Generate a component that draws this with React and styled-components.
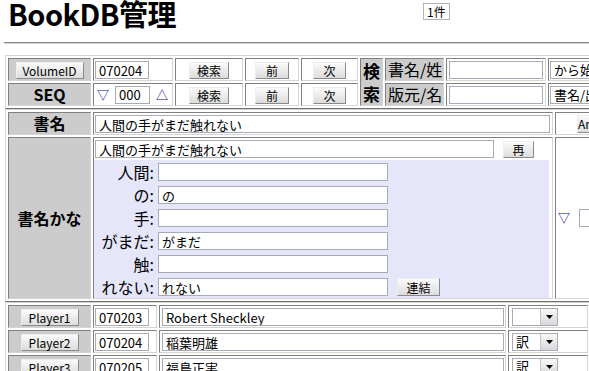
import styled, { createGlobalStyle } from "styled-components";

const FONT = `"Noto Sans CJK JP", "Liberation Sans", sans-serif`;

const GlobalStyle = createGlobalStyle`
  html, body {
    margin: 0;
    padding: 0;
    overflow: hidden;
    background: #fff;
  }
  body {
    font-family: ${FONT};
    font-size: 12px;
    color: #000;
  }
`;

const Page = styled.div`
  width: 589px;
  height: 371px;
  overflow: hidden;
  padding-left: 5px;
  box-sizing: border-box;
`;

const Header = styled.header`
  display: flex;
  align-items: flex-start;
  height: 42px;
`;

const Title = styled.h1`
  margin: 0;
  width: 418px;
  padding-left: 3px;
  box-sizing: border-box;
  font-size: 29px;
  font-weight: bold;
  line-height: 26px;
  letter-spacing: -0.5px;
  white-space: nowrap;
`;

const Count = styled.span`
  margin-top: 3px;
  height: 17px;
  box-sizing: border-box;
  padding: 0 3px;
  border: 1px solid #b4b4b4;
  font-size: 12px;
  line-height: 15px;
`;

const Rule = styled.hr`
  margin: 0 0 0 -1px;
  border: 0;
  border-top: 1px solid #858585;
  border-bottom: 1px solid #d6d6d6;
`;

const Frame = styled.table`
  border-collapse: separate;
  border-spacing: 2px;
  table-layout: fixed;
  width: ${(p) => p.$w}px;
  margin-top: ${(p) => p.$mt || 0}px;
  border: 1px solid;
  border-color: #d4d4d4 #707070 #707070 #d4d4d4;
  font-size: 12px;
`;

const Col = styled.col`
  width: ${(p) => p.$w}px;
`;

const Cell = styled.td`
  box-sizing: border-box;
  height: ${(p) => p.$h || 23}px;
  padding: 0 ${(p) => p.$pad ?? 2}px;
  border: 1px solid;
  border-color: #808080 #d4d4d4 #d4d4d4 #808080;
  background: ${(p) => (p.$gray ? "#cccccc" : "#fff")};
  text-align: ${(p) => p.$align || "left"};
  vertical-align: ${(p) => p.$valign || "middle"};
  white-space: nowrap;
  overflow: hidden;
`;

const Heading = styled.span`
  font-size: 16px;
  font-weight: bold;
  line-height: 18px;
`;

const Stack = styled.div`
  font-size: 17px;
  font-weight: bold;
  line-height: 23px;
  text-align: center;
`;

const Label = styled.span`
  font-size: 16px;
  line-height: 18px;
`;

const Btn = styled.button`
  box-sizing: border-box;
  width: ${(p) => p.$w}px;
  height: ${(p) => p.$h || 17}px;
  padding: 0;
  margin: 0;
  font-family: ${FONT};
  font-size: 12px;
  line-height: 15px;
  color: #000;
  background: linear-gradient(#fbfbfb, #dcdcdc);
  border: 1px solid;
  border-color: #eeeeee #8a8a8a #8a8a8a #eeeeee;
  vertical-align: middle;
`;

const Field = styled.input`
  box-sizing: border-box;
  width: ${(p) => p.$w}px;
  height: 18px;
  padding: 0 3px;
  margin: 0;
  font-family: ${FONT};
  font-size: 13px;
  color: #000;
  background: #fff;
  border: 1px solid #a9aab8;
  vertical-align: middle;
  outline: none;
`;

const SelectBox = styled.div`
  display: inline-flex;
  box-sizing: border-box;
  width: ${(p) => p.$w}px;
  height: 18px;
  border: 1px solid #a9aab8;
  background: #fff;
  vertical-align: middle;
`;

const SelectText = styled.span`
  flex: 1;
  padding-left: 3px;
  font-size: 13px;
  line-height: 16px;
  overflow: hidden;
  white-space: nowrap;
`;

const SelectArrow = styled.span`
  display: flex;
  align-items: center;
  justify-content: center;
  width: 16px;
  background: linear-gradient(#f8f8f8, #d8d8d8);
  border-left: 1px solid #c4c4c4;
`;

const Tri = styled.span`
  color: #0000a0;
  font-size: 12px;
  line-height: 18px;
`;

const Seq = styled.div`
  display: flex;
  align-items: center;
  gap: 6px;
  padding-left: 1px;
`;

const KanaTop = styled.div`
  display: flex;
  align-items: center;
  gap: 9px;
  height: 22px;
  padding-left: 1px;
`;

const KanaPanel = styled.div`
  display: grid;
  grid-template-columns: 60px 230px auto;
  column-gap: 4px;
  row-gap: 5px;
  align-items: center;
  margin-right: 3px;
  padding: 3px 0 2px;
  background: #e6e6fa;
`;

const KanaLabel = styled.span`
  font-size: 16px;
  line-height: 18px;
  text-align: right;
`;

const Side = styled.div`
  display: flex;
  align-items: center;
  gap: 9px;
  padding-left: ${(p) => p.$pl || 0}px;
`;

const Select = ({ w, value }) => (
  <SelectBox $w={w}>
    <SelectText>{value}</SelectText>
    {w < 80 && (
      <SelectArrow>
        <svg width="7" height="4" viewBox="0 0 7 4">
          <polygon points="0,0 7,0 3.5,4" fill="#000" />
        </svg>
      </SelectArrow>
    )}
  </SelectBox>
);

const kana = [
  ["人間", ""],
  ["の", "の"],
  ["手", ""],
  ["がまだ", "がまだ"],
  ["触", ""],
  ["れない", "れない"],
];

const players = [
  ["Player1", "070203", "Robert Sheckley", ""],
  ["Player2", "070204", "稲葉明雄", "訳"],
  ["Player3", "070205", "福島正実", "訳"],
];

export default function App() {
  return (
    <Page>
      <GlobalStyle />
      <Header>
        <Title>BookDB管理</Title>
        <Count>1件</Count>
      </Header>
      <Rule />

      <Frame $w={638} $mt={11}>
        <colgroup>
          <Col $w={83} />
          <Col $w={80} />
          <Col $w={68} />
          <Col $w={54} />
          <Col $w={57} />
          <Col $w={23} />
          <Col $w={59} />
          <Col $w={100} />
          <Col $w={92} />
        </colgroup>
        <tbody>
          <tr>
            <Cell $gray $align="center">
              <Btn $w={68}>VolumeID</Btn>
            </Cell>
            <Cell $pad={1}>
              <Field $w={54} defaultValue="070204" />
            </Cell>
            <Cell $align="center">
              <Btn $w={40}>検索</Btn>
            </Cell>
            <Cell $align="center">
              <Btn $w={34}>前</Btn>
            </Cell>
            <Cell $align="center">
              <Btn $w={33}>次</Btn>
            </Cell>
            <Cell $gray rowSpan={2} $pad={0}>
              <Stack>
                検<br />索
              </Stack>
            </Cell>
            <Cell $gray>
              <Label>書名/姓</Label>
            </Cell>
            <Cell>
              <Field $w={94} />
            </Cell>
            <Cell $pad={1}>
              <Select w={90} value="から始まる" />
            </Cell>
          </tr>
          <tr>
            <Cell $gray $align="center">
              <Heading>SEQ</Heading>
            </Cell>
            <Cell>
              <Seq>
                <Tri>▽</Tri>
                <Field $w={35} defaultValue="000" />
                <Tri>△</Tri>
              </Seq>
            </Cell>
            <Cell $align="center">
              <Btn $w={40}>検索</Btn>
            </Cell>
            <Cell $align="center">
              <Btn $w={34}>前</Btn>
            </Cell>
            <Cell $align="center">
              <Btn $w={33}>次</Btn>
            </Cell>
            <Cell $gray>
              <Label>版元/名</Label>
            </Cell>
            <Cell>
              <Field $w={94} />
            </Cell>
            <Cell $pad={1}>
              <Select w={90} value="書名/出版元" />
            </Cell>
          </tr>
        </tbody>
      </Frame>

      <Frame $w={613}>
        <colgroup>
          <Col $w={83} />
          <Col $w={460} />
          <Col $w={60} />
        </colgroup>
        <tbody>
          <tr>
            <Cell $gray $align="center">
              <Heading>書名</Heading>
            </Cell>
            <Cell $pad={1}>
              <Field $w={455} defaultValue="人間の手がまだ触れない" />
            </Cell>
            <Cell>
              <Side $pl={19}>
                <Btn $w={64} $h={18}>
                  Amazon
                </Btn>
              </Side>
            </Cell>
          </tr>
          <tr>
            <Cell $gray $align="center">
              <Heading>書名かな</Heading>
            </Cell>
            <Cell $pad={0} $valign="top">
              <KanaTop>
                <Field $w={399} defaultValue="人間の手がまだ触れない" />
                <Btn $w={31}>再</Btn>
              </KanaTop>
              <KanaPanel>
                {kana.map(([label, value], i) => [
                  <KanaLabel key={`l${i}`}>{label}:</KanaLabel>,
                  <Field key={`f${i}`} $w={230} defaultValue={value} />,
                  i === kana.length - 1 ? (
                    <Side key={`b${i}`} $pl={5}>
                      <Btn $w={43} $h={18}>
                        連結
                      </Btn>
                    </Side>
                  ) : (
                    <span key={`s${i}`} />
                  ),
                ])}
              </KanaPanel>
            </Cell>
            <Cell>
              <Side>
                <Tri>▽</Tri>
                <Field $w={40} />
              </Side>
            </Cell>
          </tr>
        </tbody>
      </Frame>

      <Frame $w={586}>
        <colgroup>
          <Col $w={83} />
          <Col $w={64} />
          <Col $w={347} />
          <Col $w={80} />
        </colgroup>
        <tbody>
          {players.map(([name, id, person, role]) => (
            <tr key={name}>
              <Cell $gray $align="center">
                <Btn $w={58}>{name}</Btn>
              </Cell>
              <Cell $pad={1}>
                <Field $w={54} defaultValue={id} />
              </Cell>
              <Cell $pad={2}>
                <Field $w={342} defaultValue={person} />
              </Cell>
              <Cell $pad={3}>
                <Select w={46} value={role} />
              </Cell>
            </tr>
          ))}
        </tbody>
      </Frame>
    </Page>
  );
}
